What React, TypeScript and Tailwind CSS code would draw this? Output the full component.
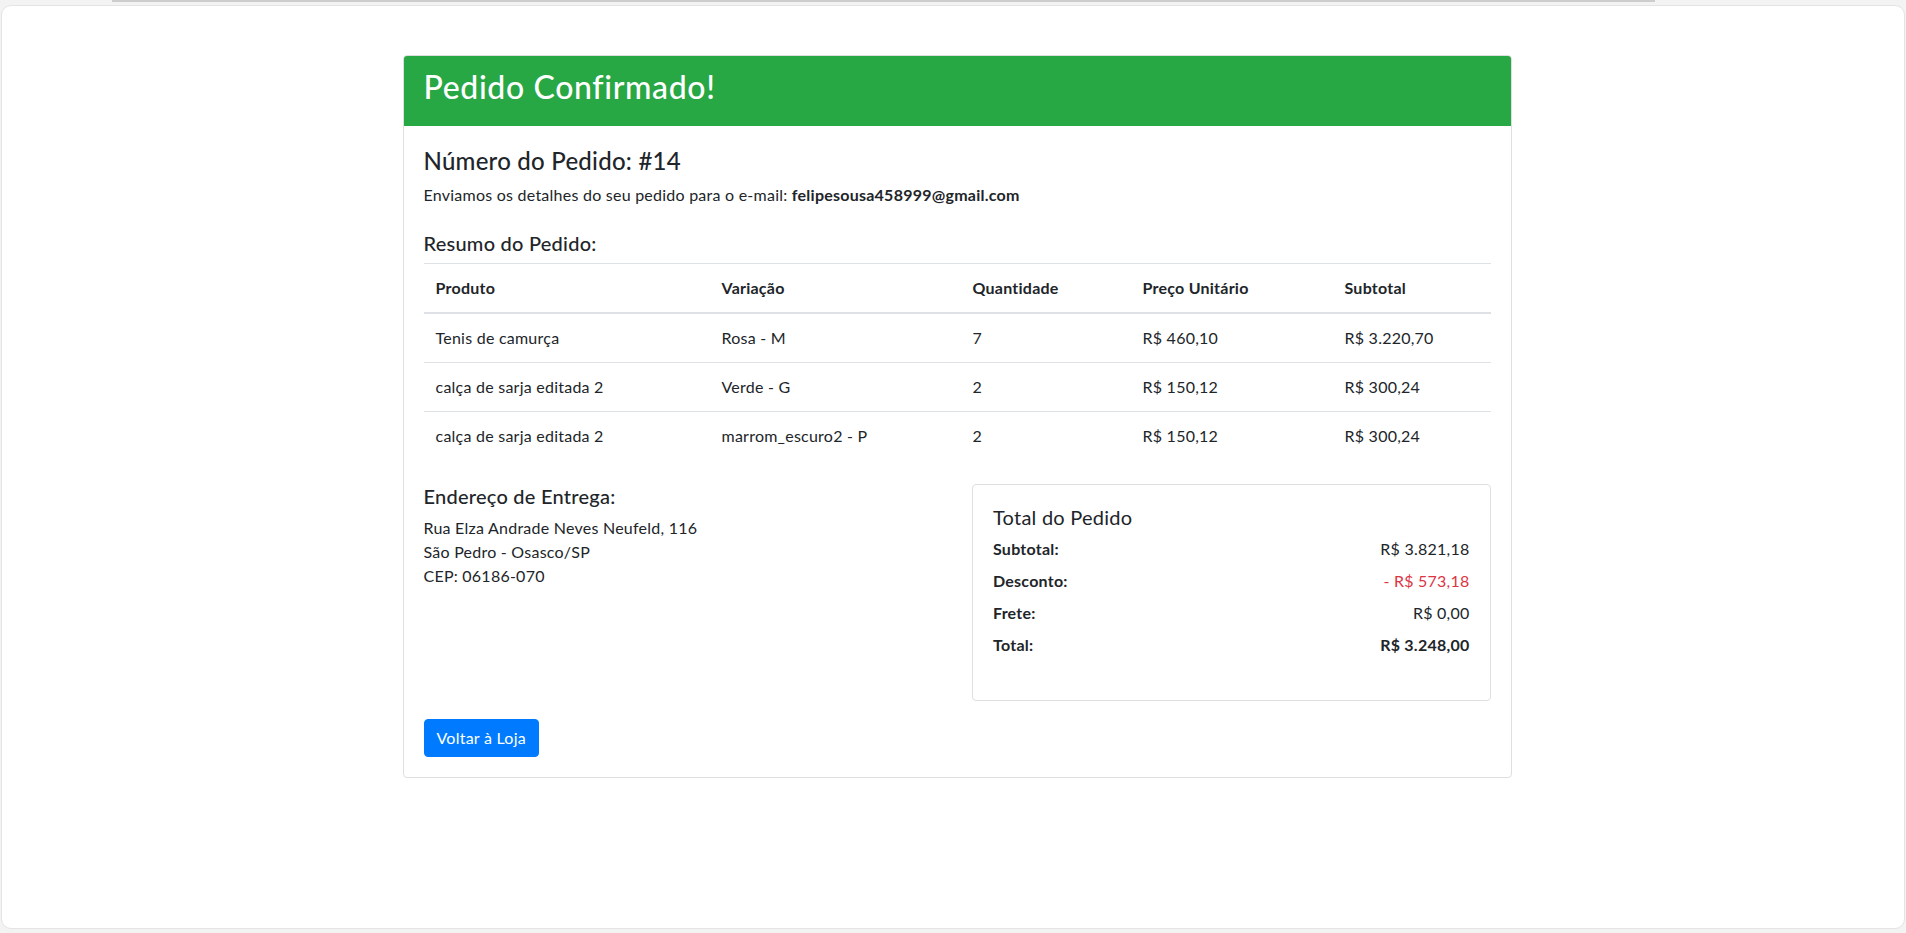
import React from "react";

const items = [
  { produto: "Tenis de camurça", variacao: "Rosa - M", qtd: 7, preco: "R$ 460,10", subtotal: "R$ 3.220,70" },
  { produto: "calça de sarja editada 2", variacao: "Verde - G", qtd: 2, preco: "R$ 150,12", subtotal: "R$ 300,24" },
  { produto: "calça de sarja editada 2", variacao: "marrom_escuro2 - P", qtd: 2, preco: "R$ 150,12", subtotal: "R$ 300,24" },
];

const App = () => {
  return (
    <div
      className="min-h-screen bg-[#f3f3f3] text-[#212529] text-[16px] leading-[24px] tracking-[0.015em]"
      style={{ fontFamily: 'Lato, "Noto Sans", sans-serif' }}
    >
      <div className="ml-[112px] w-[1543px] h-[2px] bg-[#cdcdcd]" />
      <div className="mt-[3px] mx-[1px] h-[924px] bg-white border border-[#e4e4e4] rounded-[10px] pt-[49px] pl-[8px]">
        <div className="w-[1109px] mx-auto border border-[#dfdfdf] rounded-[4px] overflow-hidden">
          <div className="bg-[#28a745] text-white px-[20px] pt-[12px] pb-[20px]">
            <h2 className="text-[32px] leading-[38px] font-medium tracking-[0.02em]">Pedido Confirmado!</h2>
          </div>

          <div className="p-[20px]">
            <h4 className="text-[24px] leading-[29px] font-medium mb-[8px]">Número do Pedido: #14</h4>
            <p className="mb-[16px]">
              Enviamos os detalhes do seu pedido para o e-mail: <strong className="font-bold">felipesousa458999@gmail.com</strong>
            </p>

            <h5 className="text-[20px] leading-[24px] font-medium mt-[24px] mb-[8px]">Resumo do Pedido:</h5>
            <table className="w-full table-fixed border-collapse mb-[24px]">
              <colgroup>
                <col className="w-[286px]" />
                <col className="w-[251px]" />
                <col className="w-[170px]" />
                <col className="w-[202px]" />
                <col />
              </colgroup>
              <thead>
                <tr className="border-t border-[#dee2e6]">
                  <th className="text-left font-bold p-[12px] border-b-2 border-[#dee2e6]">Produto</th>
                  <th className="text-left font-bold p-[12px] border-b-2 border-[#dee2e6]">Variação</th>
                  <th className="text-left font-bold p-[12px] border-b-2 border-[#dee2e6]">Quantidade</th>
                  <th className="text-left font-bold p-[12px] border-b-2 border-[#dee2e6]">Preço Unitário</th>
                  <th className="text-left font-bold p-[12px] border-b-2 border-[#dee2e6]">Subtotal</th>
                </tr>
              </thead>
              <tbody>
                {items.map((item, i) => (
                  <tr key={i} className={i > 0 ? "border-t border-[#dee2e6]" : ""}>
                    <td className="p-[12px]">{item.produto}</td>
                    <td className="p-[12px]">{item.variacao}</td>
                    <td className="p-[12px]">{item.qtd}</td>
                    <td className="p-[12px]">{item.preco}</td>
                    <td className="p-[12px]">{item.subtotal}</td>
                  </tr>
                ))}
              </tbody>
            </table>

            <div className="grid grid-cols-2 gap-[30px]">
              <div>
                <h5 className="text-[20px] leading-[24px] font-medium mb-[8px]">Endereço de Entrega:</h5>
                <p>Rua Elza Andrade Neves Neufeld, 116</p>
                <p>São Pedro - Osasco/SP</p>
                <p>CEP: 06186-070</p>
              </div>
              <div className="border border-[#dfdfdf] rounded-[4px] p-[20px] pb-[43px]">
                <h5 className="text-[20px] leading-[24px] mb-[8px]">Total do Pedido</h5>
                <div className="flex justify-between mb-[8px]">
                  <strong className="font-bold">Subtotal:</strong>
                  <span>R$ 3.821,18</span>
                </div>
                <div className="flex justify-between mb-[8px]">
                  <strong className="font-bold">Desconto:</strong>
                  <span className="text-[#dc3545]">- R$ 573,18</span>
                </div>
                <div className="flex justify-between mb-[8px]">
                  <strong className="font-bold">Frete:</strong>
                  <span>R$ 0,00</span>
                </div>
                <div className="flex justify-between">
                  <strong className="font-bold">Total:</strong>
                  <strong className="font-bold">R$ 3.248,00</strong>
                </div>
              </div>
            </div>

            <button className="mt-[18px] bg-[#007bff] text-white rounded-[4px] border border-[#007bff] px-[12px] py-[6px] leading-[24px]">
              Voltar à Loja
            </button>
          </div>
        </div>
      </div>
    </div>
  );
};

export default App;
